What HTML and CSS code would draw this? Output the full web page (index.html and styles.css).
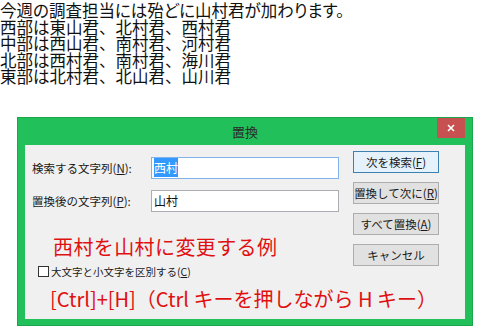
FILE: index.html
```html
<!DOCTYPE html>
<html lang="ja">
<head>
    <meta charset="UTF-8">
    <meta name="viewport" content="width=device-width, initial-scale=1.0">
    <title>置換</title>
    <link rel="stylesheet" href="styles.css">
</head>
<body>

    <div id="memo">
        <p>今週の調査担当には殆どに山村君が加わります。</p>
        <p>西部は東山君<span class="punct">、</span>北村君<span class="punct">、</span>西村君</p>
        <p>中部は西山君<span class="punct">、</span>南村君<span class="punct">、</span>河村君</p>
        <p>北部は西村君<span class="punct">、</span>南村君<span class="punct">、</span>海川君</p>
        <p>東部は北村君<span class="punct">、</span>北山君<span class="punct">、</span>山川君</p>
    </div>

    <div id="dialog">
        <div class="titlebar">
            <span>置換</span>
            <div class="close">
                <svg width="8" height="8" viewBox="0 0 8 8"><path d="M1 1L7 7M7 1L1 7" stroke="#fff" stroke-width="1.6"/></svg>
            </div>
        </div>

        <div class="panel">
            <div class="left">
                <div class="row">
                    <label>検索する文字列(<u>N</u>):</label>
                    <div class="input focus"><span class="sel">西村</span></div>
                </div>
                <div class="row">
                    <label>置換後の文字列(<u>P</u>):</label>
                    <div class="input">山村</div>
                </div>

                <div class="note first">西村を山村に変更する例</div>

                <div class="check">
                    <div class="box"></div>
                    <span>大文字と小文字を区別する(<u>C</u>)</span>
                </div>

                <div class="note second">[Ctrl]+[H]（Ctrl キーを押しながら H キー）</div>
            </div>

            <div class="buttons">
                <button class="default">次を検索(<u>F</u>)</button>
                <button>置換して次に(<u>R</u>)</button>
                <button>すべて置換(<u>A</u>)</button>
                <button>キャンセル</button>
            </div>
        </div>
    </div>

</body>
</html>
```

FILE: styles.css
```css
*{
    margin: 0;
    padding: 0;
    box-sizing: border-box;
}
body{
    background-color: #fff;
    font-family: "Noto Sans CJK JP", sans-serif;
    color: #111;
}
#memo{
    padding: 2px 0 0 0;
    font-size: 16.5px;
    line-height: 16.5px;
    font-feature-settings: "palt";
}
#memo .punct{
    font-feature-settings: normal;
}
#dialog{
    width: 456px;
    margin: 32px 0 0 17px;
    background-color: #22c05a;
    border: 1px solid #1aa64a;
    padding: 0 7px 6px 7px;
}
.titlebar{
    position: relative;
    height: 27px;
    display: flex;
    justify-content: center;
    align-items: center;
    font-size: 13px;
    color: #2a2a2a;
}
.close{
    position: absolute;
    right: 0;
    top: 0;
    width: 28px;
    height: 20px;
    background-color: #c75050;
    display: flex;
    justify-content: center;
    align-items: center;
}
.panel{
    height: 174px;
    background-color: #f0f0f0;
    display: flex;
    align-items: flex-start;
}
.left{
    flex: 1;
    min-width: 0;
    padding: 12px 0 0 7px;
}
.row{
    display: flex;
    align-items: center;
    margin-bottom: 11px;
}
.row label{
    width: 119px;
    font-size: 11.5px;
    color: #1a1a1a;
}
.input{
    width: 188px;
    height: 22px;
    background-color: #fff;
    border: 1px solid #abadb3;
    font-size: 12px;
    line-height: 20px;
    padding-left: 2px;
    color: #111;
}
.input.focus{
    border-color: #7eb4ea;
}
.sel{
    background-color: #3399ff;
    color: #fff;
    padding: 1px 0;
}
.note{
    color: #e01010;
    font-size: 20px;
    line-height: 26px;
    white-space: nowrap;
}
.note.first{
    margin: 22px 0 0 21px;
    letter-spacing: 0.4px;
}
.note.second{
    margin: 7px 0 0 18px;
}
.check{
    display: flex;
    align-items: center;
    margin: 5px 0 0 6px;
    font-size: 10.5px;
    line-height: 14px;
    color: #1a1a1a;
}
.box{
    width: 11px;
    height: 11px;
    border: 1px solid #333;
    background-color: #fff;
    margin-right: 2px;
}
.buttons{
    width: 86px;
    flex-shrink: 0;
    margin: 6px 26px 0 0;
    display: flex;
    flex-direction: column;
    gap: 9px;
}
.buttons button{
    height: 22px;
    font-family: "Noto Sans CJK JP", sans-serif;
    font-size: 11.5px;
    color: #1a1a1a;
    background-color: #e1e1e1;
    border: 1px solid #adadad;
}
.buttons button.default{
    border-color: #3c7fb1;
    background-color: #e5f1fb;
}
```
